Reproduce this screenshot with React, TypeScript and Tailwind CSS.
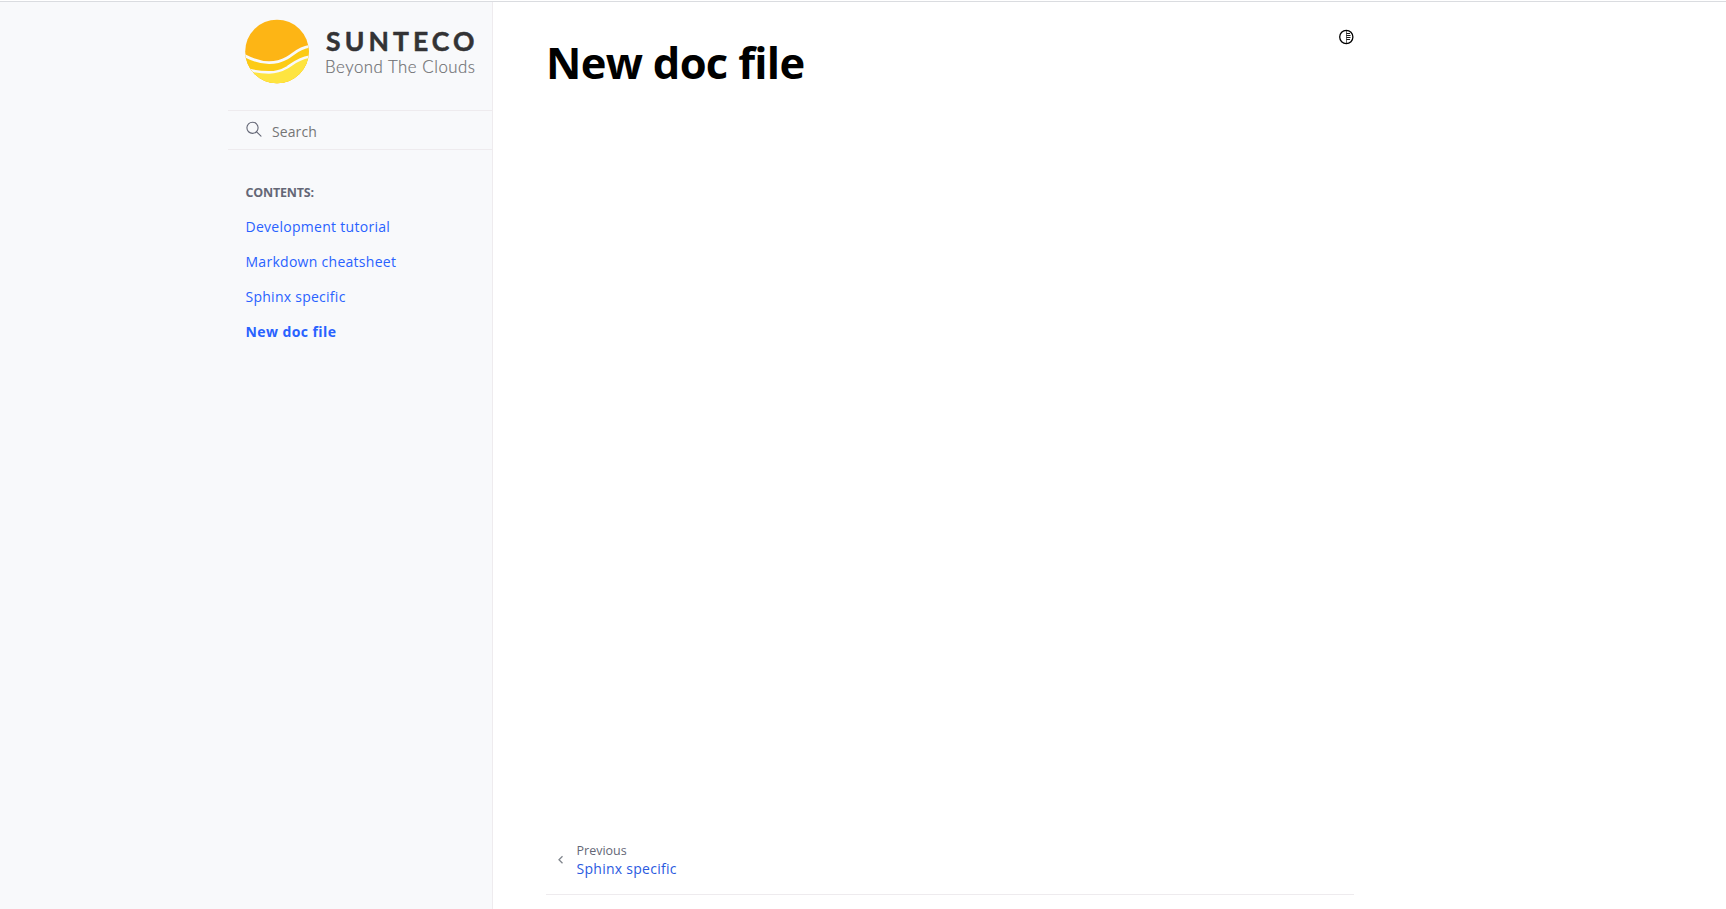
import React from "react";

const links = [
  { label: "Development tutorial", style: "tracking-[0.28px]" },
  { label: "Markdown cheatsheet", style: "tracking-[0.28px]" },
  { label: "Sphinx specific", style: "tracking-[0.26px]" },
  { label: "New doc file", style: "font-bold tracking-[0.42px]" },
];

function Logo() {
  return (
    <svg width="232" height="65" viewBox="0 0 232 65" className="block">
      <defs>
        <clipPath id="sun">
          <circle cx="32" cy="32.5" r="31.8" />
        </clipPath>
      </defs>
      <g clipPath="url(#sun)">
        <rect width="65" height="65" fill="#fdb515" />
        <path d="M-1 36.3C8 41 16 43.7 24 43.7C31 43.7 36 42.3 42 39C49 35 54 28.5 65 27.3V65H-1Z" fill="#fccb15" />
        <path d="M3 50.5C10 52.6 16 53.4 24 53.4C31 53.4 36 52 42 48.5C49 44 54 39 65 37.6V65H3Z" fill="#fee440" />
        <path d="M-1 36.3C8 41 16 43.7 24 43.7C31 43.7 36 42.3 42 39C49 35 54 28.5 65 27.3" fill="none" stroke="#f8f9fb" strokeWidth="2.8" />
        <path d="M3 50.5C10 52.6 16 53.4 24 53.4C31 53.4 36 52 42 48.5C49 44 54 39 65 37.6" fill="none" stroke="#f8f9fb" strokeWidth="2.6" />
      </g>
      <text x="81" y="31.8" textLength="148.5" fontFamily="Lato, sans-serif" fontWeight="700" fontSize="26.5" fill="#333335" stroke="#333335" strokeWidth="0.5" strokeLinejoin="round">SUNTECO</text>
      <text x="80" y="54" textLength="150" fontFamily="Lato, sans-serif" fontWeight="300" fontSize="16.8" fill="#707174" stroke="#707174" strokeWidth="0.2">Beyond The Clouds</text>
    </svg>
  );
}

export default function App() {
  return (
    <div className="flex h-[909px] overflow-hidden border-t border-white bg-white font-['Open_Sans','Noto_Sans',sans-serif]">
      <div className="flex w-full border-t border-[#dadce0]">
        <aside className="flex w-[493px] shrink-0 justify-end border-r border-[#eeebee] bg-[#f8f9fb]">
          <div className="w-[264px]">
            <div className="h-[108px] pt-[17px] pl-[17px]">
              <Logo />
            </div>
            <div className="flex h-10 items-center border-y border-[#eeebee] pl-[18px]">
              <svg width="16" height="16" viewBox="0 0 16 16" className="-mt-0.5" fill="none" stroke="#646776" strokeWidth="1.1">
                <circle cx="6.5" cy="6.8" r="5.6" />
                <path d="M10.6 10.9L15 15.2" strokeLinecap="round" />
              </svg>
              <span className="ml-[10px] pt-0.5 text-[14px] tracking-[0.1px] text-[#757575]">Search</span>
            </div>
            <nav className="pt-[32px] pl-[17.5px]">
              <p className="h-[22px] text-[12.5px] leading-[22px] font-bold tracking-[-0.2px] text-[#646776]">CONTENTS:</p>
              <ul className="mt-[5px]">
                {links.map((l) => (
                  <li key={l.label} className="h-[35px] text-[14px] leading-[35px] text-[#2962ff]">
                    <a className={l.style}>{l.label}</a>
                  </li>
                ))}
              </ul>
            </nav>
          </div>
        </aside>
        <main className="ml-[53px] flex w-[808px] flex-col">
          <div className="flex h-[120px] justify-between">
            <h1 className="pt-[31px] text-[43.5px] leading-[60px] font-bold tracking-[-0.7px] text-black">New doc file</h1>
            <svg width="16" height="16" viewBox="0 0 16 16" className="mt-[27px]" fill="none" stroke="#000">
              <circle cx="8.3" cy="8" r="6.6" strokeWidth="1.3" />
              <path d="M8.5 2V14" strokeWidth="0.6" />
              <path d="M8.5 4.5H12M8.5 6.5H12.5M8.5 8.5H12.5M8.5 10.5H12" strokeWidth="0.9" />
            </svg>
          </div>
          <footer className="mt-auto flex h-[64px] border-b border-[#eeebee]">
            <svg width="8" height="10" viewBox="0 0 8 10" className="mt-[24px] ml-[11px]" fill="none" stroke="#81868d" strokeWidth="1.3">
              <path d="M5.5 1.2L2 4.7L5.5 8.2" />
            </svg>
            <div className="ml-[11.5px] pt-[11px]">
              <p className="text-[12.5px] leading-[18px] text-[#646776]">Previous</p>
              <a className="block text-[14px] leading-[17px] tracking-[0.27px] text-[#2a5adf]">Sphinx specific</a>
            </div>
          </footer>
          <div className="h-[14px] shrink-0" />
        </main>
      </div>
    </div>
  );
}
